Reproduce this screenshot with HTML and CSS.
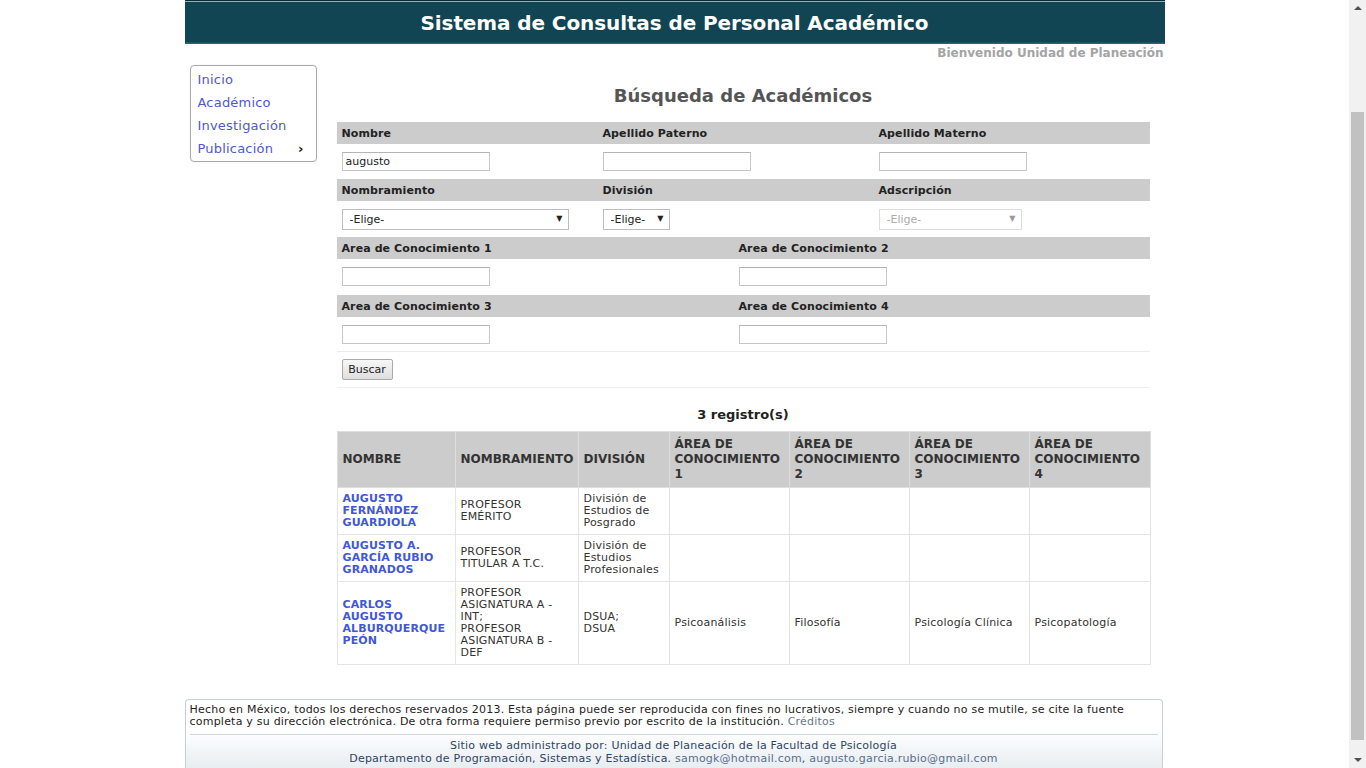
FILE: index.html
```html
<!DOCTYPE html>
<html lang="es">
<head>
<meta charset="utf-8">
<title>Sistema de Consultas de Personal Académico</title>
<link rel="stylesheet" href="styles.css">
</head>
<body>
<div class="page">
  <header class="banner"><h1>Sistema de Consultas de Personal Académico</h1></header>
  <div class="welcome">Bienvenido Unidad de Planeación</div>
  <div class="main">
    <nav class="menu">
      <a href="#">Inicio</a>
      <a href="#">Académico</a>
      <a href="#">Investigación</a>
      <a href="#" class="has-sub"><span>Publicación</span><span class="chev">›</span></a>
    </nav>
    <section class="content">
      <h2 class="title">Búsqueda de Académicos</h2>
      <form class="search">
        <div class="row3 labels"><span>Nombre</span><span>Apellido Paterno</span><span>Apellido Materno</span></div>
        <div class="row3 fields f1">
          <span><input class="txt" type="text" value="augusto"></span>
          <span><input class="txt" type="text"></span>
          <span><input class="txt" type="text"></span>
        </div>
        <div class="row3 labels"><span>Nombramiento</span><span>División</span><span>Adscripción</span></div>
        <div class="row3 fields f2">
          <span><span class="sel w1"><select><option>-Elige-</option></select></span></span>
          <span><span class="sel w2"><select><option>-Elige-</option></select></span></span>
          <span><span class="sel w3 off"><select disabled><option>-Elige-</option></select></span></span>
        </div>
        <div class="row2 labels"><span>Area de Conocimiento 1</span><span>Area de Conocimiento 2</span></div>
        <div class="row2 fields f3">
          <span><input class="txt" type="text"></span>
          <span><input class="txt" type="text"></span>
        </div>
        <div class="row2 labels"><span>Area de Conocimiento 3</span><span>Area de Conocimiento 4</span></div>
        <div class="row2 fields f4">
          <span><input class="txt" type="text"></span>
          <span><input class="txt" type="text"></span>
        </div>
        <div class="actions"><button type="button" class="btn">Buscar</button></div>
      </form>
      <p class="count">3 registro(s)</p>
      <table class="results">
        <colgroup>
          <col class="c-name"><col class="c-nom"><col class="c-div"><col class="c-area"><col class="c-area"><col class="c-area"><col class="c-area4">
        </colgroup>
        <thead>
          <tr>
            <th>NOMBRE</th>
            <th>NOMBRAMIENTO</th>
            <th>DIVISIÓN</th>
            <th>ÁREA DE CONOCIMIENTO 1</th>
            <th>ÁREA DE CONOCIMIENTO 2</th>
            <th>ÁREA DE CONOCIMIENTO 3</th>
            <th>ÁREA DE CONOCIMIENTO 4</th>
          </tr>
        </thead>
        <tbody>
          <tr>
            <td><a href="#" class="name">AUGUSTO FERNÁNDEZ GUARDIOLA</a></td>
            <td>PROFESOR EMÉRITO</td>
            <td>División de Estudios de Posgrado</td>
            <td></td><td></td><td></td><td></td>
          </tr>
          <tr>
            <td><a href="#" class="name">AUGUSTO A. GARCÍA RUBIO GRANADOS</a></td>
            <td>PROFESOR TITULAR A T.C.</td>
            <td>División de Estudios Profesionales</td>
            <td></td><td></td><td></td><td></td>
          </tr>
          <tr>
            <td><a href="#" class="name">CARLOS AUGUSTO ALBURQUERQUE PEÓN</a></td>
            <td>PROFESOR ASIGNATURA A - INT;<br>PROFESOR ASIGNATURA B - DEF</td>
            <td>DSUA;<br>DSUA</td>
            <td>Psicoanálisis</td>
            <td>Filosofía</td>
            <td>Psicología Clínica</td>
            <td>Psicopatología</td>
          </tr>
        </tbody>
      </table>
    </section>
  </div>
  <footer class="footer">
    <p class="legal">Hecho en México, todos los derechos reservados 2013. Esta página puede ser reproducida con fines no lucrativos, siempre y cuando no se mutile, se cite la fuente completa y su dirección electrónica. De otra forma requiere permiso previo por escrito de la institución. <a href="#">Créditos</a></p>
    <div class="admin">
      <p>Sitio web administrado por: Unidad de Planeación de la Facultad de Psicología</p>
      <p>Departamento de Programación, Sistemas y Estadística. <a href="#">samogk@hotmail.com</a>, <a href="#">augusto.garcia.rubio@gmail.com</a></p>
    </div>
  </footer>
</div>
<div class="scrollbar" aria-hidden="true">
  <span class="arrow up"></span>
  <span class="thumb"></span>
  <span class="arrow down"></span>
</div>
</body>
</html>
```

FILE: styles.css
```css
html, body {
  margin: 0;
  padding: 0;
}

body {
  margin-right: 17px;
  font-family: "DejaVu Sans", Verdana, sans-serif;
  font-size: 11px;
  color: #222;
  background: #fff;
}

.page {
  width: 980px;
  margin: 0 auto;
}

/* Header */
.banner {
  height: 44px;
  box-sizing: border-box;
  padding-top: 2px;
  background: linear-gradient(to bottom, #0b2a33 0, #0b2a33 1px, #8db3bb 1px, #8db3bb 2px, #124553 2px, #124553 42px, #2b6572 43px);
  display: flex;
  align-items: center;
  justify-content: center;
}

.banner h1 {
  margin: 0;
  color: #fff;
  font-size: 20px;
  font-weight: bold;
  letter-spacing: -0.1px;
}

.welcome {
  height: 16px;
  line-height: 18px;
  text-align: right;
  font-size: 12px;
  font-weight: bold;
  color: #a4a4a4;
  padding-right: 1px;
}

/* Main */
.main {
  display: flex;
  align-items: flex-start;
  margin-top: 5px;
}

.menu {
  margin-left: 5px;
  width: 127px;
  box-sizing: border-box;
  border: 1px solid #a9a9a9;
  border-radius: 4px;
  padding: 2px 0 1px;
  box-shadow: 0 0 2px rgba(0, 0, 0, 0.08);
}

.menu a {
  display: block;
  line-height: 23px;
  padding-left: 7px;
  font-size: 13px;
  letter-spacing: 0.2px;
  color: #4b59cf;
  text-decoration: none;
}

.menu a.has-sub {
  display: flex;
  justify-content: space-between;
  padding-right: 12px;
}

.menu .chev {
  color: #111;
  font-weight: bold;
  font-size: 13px;
}

.content {
  margin-left: 20px;
  width: 813px;
}

.title {
  margin: 0 0 15px;
  padding-top: 20px;
  font-size: 18px;
  line-height: 22px;
  font-weight: bold;
  text-align: center;
  color: #555;
}

/* Search form */
.search {
  margin: 0;
}

.row3 {
  display: grid;
  grid-template-columns: 261px 276px 276px;
}

.row2 {
  display: grid;
  grid-template-columns: 397px 416px;
}

.labels {
  height: 22px;
  line-height: 23px;
  background: #cccccc;
  font-weight: bold;
  color: #222;
  letter-spacing: 0.1px;
}

.labels span {
  padding-left: 5px;
}

.fields span {
  padding-left: 5px;
}

.fields .sel {
  padding-left: 0;
}

.f1 { height: 35px; }
.f2 { height: 36px; }
.f3 { height: 36px; }
.f4 { height: 34px; }

.txt {
  box-sizing: border-box;
  width: 148px;
  height: 19px;
  margin: 8px 0 0;
  padding: 0 3px;
  border: 1px solid #c6c6c6;
  border-top-color: #b4b4b4;
  font-family: "DejaVu Sans", Verdana, sans-serif;
  font-size: 11px;
  color: #222;
  background: #fff;
  display: block;
}

.sel {
  position: relative;
  display: inline-block;
  margin-top: 8px;
}

.sel select {
  -webkit-appearance: none;
  appearance: none;
  box-sizing: border-box;
  height: 21px;
  width: 100%;
  padding: 0 0 0 7px;
  margin: 0;
  border: 1px solid #bdbdbd;
  border-radius: 0;
  background: #fff;
  font-family: "DejaVu Sans", Verdana, sans-serif;
  font-size: 11px;
  color: #222;
  display: block;
}

.sel::after {
  content: "▼";
  position: absolute;
  right: 6px;
  top: 5px;
  font-size: 8px;
  line-height: 10px;
  color: #222;
  pointer-events: none;
}

.sel.w1 { width: 227px; }
.sel.w2 { width: 67px; }
.sel.w3 { width: 143px; }

.sel.off select {
  color: #8a8a8a;
  border-color: #cfcfcf;
}

.sel.off::after {
  color: #9a9a9a;
}

.actions {
  box-sizing: border-box;
  height: 37px;
  border-top: 1px solid #ececec;
  border-bottom: 1px solid #f0f0f0;
}

.btn {
  margin: 7px 0 0 5px;
  width: 51px;
  height: 21px;
  padding: 0;
  border: 1px solid #ababab;
  border-radius: 2px;
  background: linear-gradient(to bottom, #f7f7f7, #dedede);
  font-family: "DejaVu Sans", Verdana, sans-serif;
  font-size: 11px;
  color: #222;
}

/* Results */
.count {
  margin: 19px 0 8px;
  line-height: 16px;
  text-align: center;
  font-weight: bold;
  font-size: 13px;
  color: #222;
}

.results {
  width: 813px;
  border-collapse: collapse;
  table-layout: fixed;
}

.c-name { width: 118px; }
.c-nom { width: 123px; }
.c-div { width: 91px; }
.c-area { width: 120px; }
.c-area4 { width: 121px; }

.results th {
  background: #cccccc;
  border: 1px solid #dedede;
  padding: 5px 5px;
  text-align: left;
  vertical-align: middle;
  font-size: 12px;
  line-height: 15px;
  font-weight: bold;
  color: #333;
}

.results td {
  border: 1px solid #e4e4e4;
  padding: 5px 6px 5px 5px;
  vertical-align: middle;
  font-size: 11px;
  line-height: 12px;
  letter-spacing: 0.2px;
  color: #333;
}

.results a.name {
  color: #3f57d9;
  font-weight: bold;
  text-decoration: none;
  letter-spacing: 0.1px;
}

/* Footer */
.footer {
  margin-top: 34px;
  width: 978px;
  box-sizing: border-box;
  border: 1px solid #c8cfd5;
  border-bottom: none;
  border-radius: 4px 4px 0 0;
  padding: 4px 4px 30px;
  background: linear-gradient(to bottom, #ffffff 0, #ffffff 30px, #e3eaee 75px, #dbe4ea 100%);
  font-size: 11px;
  line-height: 12px;
  letter-spacing: 0.22px;
  color: #222;
}

.footer p {
  margin: 0;
}

.legal a {
  color: #66768a;
  text-decoration: none;
}

.admin {
  margin-top: 6px;
  border-top: 1px solid #cfd6dc;
  padding-top: 4px;
  text-align: center;
  line-height: 13px;
  color: #2e4466;
}

.admin a {
  color: #5a6f8e;
  text-decoration: none;
}

/* Simulated browser scrollbar */
.scrollbar {
  position: fixed;
  top: 0;
  right: 0;
  width: 17px;
  height: 100vh;
  background: #f1f1f1;
}

.scrollbar .thumb {
  position: absolute;
  left: 2px;
  right: 2px;
  top: 112px;
  bottom: 28px;
  background: #c1c1c1;
}

.scrollbar .arrow {
  position: absolute;
  left: 5px;
  width: 0;
  height: 0;
  border-left: 4px solid transparent;
  border-right: 4px solid transparent;
}

.scrollbar .up {
  top: 6px;
  border-bottom: 4px solid #505050;
}

.scrollbar .down {
  bottom: 6px;
  border-top: 4px solid #505050;
}
```
